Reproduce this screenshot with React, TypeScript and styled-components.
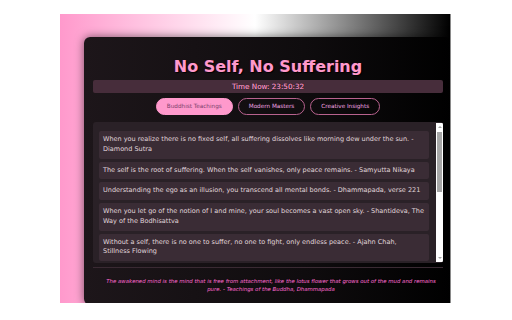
import React from "react";
import styled, { createGlobalStyle } from "styled-components";

const Global = createGlobalStyle`
  html, body { margin: 0; padding: 0; background: #ffffff; }
  body { font-family: "DejaVu Sans", Verdana, sans-serif; }
`;

const Page = styled.div`
  width: 512px;
  height: 320px;
  padding: 14px 0 0 60px;
  box-sizing: border-box;
`;

const Popup = styled.div`
  width: 391px;
  height: 289px;
  box-sizing: border-box;
  overflow: hidden;
  padding: 23px 0 0 24px;
  background: linear-gradient(to right, #ff99cc 0%, #ffffff 50%, #000000 100%);
  border-right: 1px solid #8a8a8a;
`;

const Card = styled.div`
  width: 368px;
  box-sizing: border-box;
  padding: 20px 9px 12px;
  border-radius: 6px;
  background: linear-gradient(to right, #1d161a 0%, #0f0c0e 60%, #000000 100%);
  box-shadow: 0 0 10px rgba(0, 0, 0, 0.55);
  display: flex;
  flex-direction: column;
  align-items: stretch;
`;

const Title = styled.h1`
  margin: 0;
  font-family: "DejaVu Sans", Verdana, sans-serif;
  font-weight: bold;
  font-size: 16px;
  line-height: 20px;
  text-align: center;
  color: #ff99cc;
  text-shadow: 1px 1px 1px #000, -1px 0 1px #2a0a1a;
`;

const TimeBar = styled.div`
  margin-top: 3px;
  height: 13px;
  border-radius: 2px;
  background: #472d3b;
  color: #ff99cc;
  font-size: 7.2px;
  line-height: 13px;
  text-align: center;
  text-shadow: 0 0 1px #000, 0 0 0.5px #ff99cc;
`;

const Tabs = styled.div`
  margin-top: 5px;
  display: flex;
  justify-content: center;
  gap: 5px;
`;

const Tab = styled.button<{ $active?: boolean }>`
  height: 17px;
  padding: 0 10px;
  border-radius: 9px;
  box-sizing: border-box;
  border: 1px solid ${(p) => (p.$active ? "#ff99cc" : "#b8628e")};
  background: ${(p) => (p.$active ? "#ff99cc" : "transparent")};
  color: ${(p) => (p.$active ? "#7a3e6a" : "#f4a6e4")};
  font-family: "DejaVu Sans", Verdana, sans-serif;
  font-size: 5.7px;
  line-height: 15px;
  cursor: pointer;
`;

const QuoteList = styled.div`
  margin-top: 7px;
  height: 141px;
  display: flex;
  background: #2a2127;
  border-radius: 3px;
  overflow: hidden;
`;

const QuoteColumn = styled.div`
  flex: 1;
  min-width: 0;
  padding: 9px 7px 0 6px;
  overflow: hidden;
  display: flex;
  flex-direction: column;
  gap: 3px;
`;

const Scrollbar = styled.div`
  width: 7px;
  flex: none;
  margin: 1px 0 1px;
  background: #ffffff;
  display: flex;
  flex-direction: column;
  align-items: center;
`;

const Arrow = styled.div<{ $down?: boolean }>`
  flex: none;
  height: 8px;
  width: 100%;
  display: flex;
  align-items: center;
  justify-content: center;
  &::before {
    content: "";
    width: 0;
    height: 0;
    border-left: 2px solid transparent;
    border-right: 2px solid transparent;
    ${(p) =>
      p.$down
        ? "border-top: 2.5px solid #a3a3a3;"
        : "border-bottom: 2.5px solid #a3a3a3;"}
  }
`;

const Track = styled.div`
  flex: 1;
  width: 100%;
  padding: 1px 1px;
  box-sizing: border-box;
`;

const Thumb = styled.div`
  height: 60px;
  background: #a6a6a6;
`;

const Quote = styled.div`
  flex: none;
  padding: 4px 5px 4px 4px;
  border-radius: 2px;
  background: #3a2c35;
  color: #e0d7dc;
  font-size: 6.5px;
  line-height: 9.75px;
`;

const Footer = styled.div`
  margin-top: 4px;
  border-top: 1px solid #3a2a33;
  padding: 9px 7px 0 13px;
  color: #f56fc9;
  font-style: italic;
  font-size: 5.4px;
  line-height: 8px;
  text-align: center;
  text-shadow: 0 0 1px #3a0a30;
`;

const quotes = [
  "When you realize there is no fixed self, all suffering dissolves like morning dew under the sun. - Diamond Sutra",
  "The self is the root of suffering. When the self vanishes, only peace remains. - Samyutta Nikaya",
  "Understanding the ego as an illusion, you transcend all mental bonds. - Dhammapada, verse 221",
  "When you let go of the notion of I and mine, your soul becomes a vast open sky. - Shantideva, The Way of the Bodhisattva",
  "Without a self, there is no one to suffer, no one to fight, only endless peace. - Ajahn Chah, Stillness Flowing",
  "All conditioned things are impermanent; when one sees this with wisdom, one turns away from suffering. - Dhammapada, verse 277",
  "Form is emptiness, emptiness is form. Seeing this, the heart is freed from fear. - Heart Sutra",
];

export default function App() {
  return (
    <>
      <Global />
      <Page>
        <Popup>
          <Card>
            <Title>No Self, No Suffering</Title>
            <TimeBar>Time Now: 23:50:32</TimeBar>
            <Tabs>
              <Tab $active>Buddhist Teachings</Tab>
              <Tab>Modern Masters</Tab>
              <Tab>Creative Insights</Tab>
            </Tabs>
            <QuoteList>
              <QuoteColumn>
                {quotes.map((q) => (
                  <Quote key={q}>{q}</Quote>
                ))}
              </QuoteColumn>
              <Scrollbar>
                <Arrow />
                <Track>
                  <Thumb />
                </Track>
                <Arrow $down />
              </Scrollbar>
            </QuoteList>
            <Footer>
              The awakened mind is the mind that is free from attachment, like the lotus flower that grows out of the mud and remains pure. - Teachings of the Buddha, Dhammapada
            </Footer>
          </Card>
        </Popup>
      </Page>
    </>
  );
}
